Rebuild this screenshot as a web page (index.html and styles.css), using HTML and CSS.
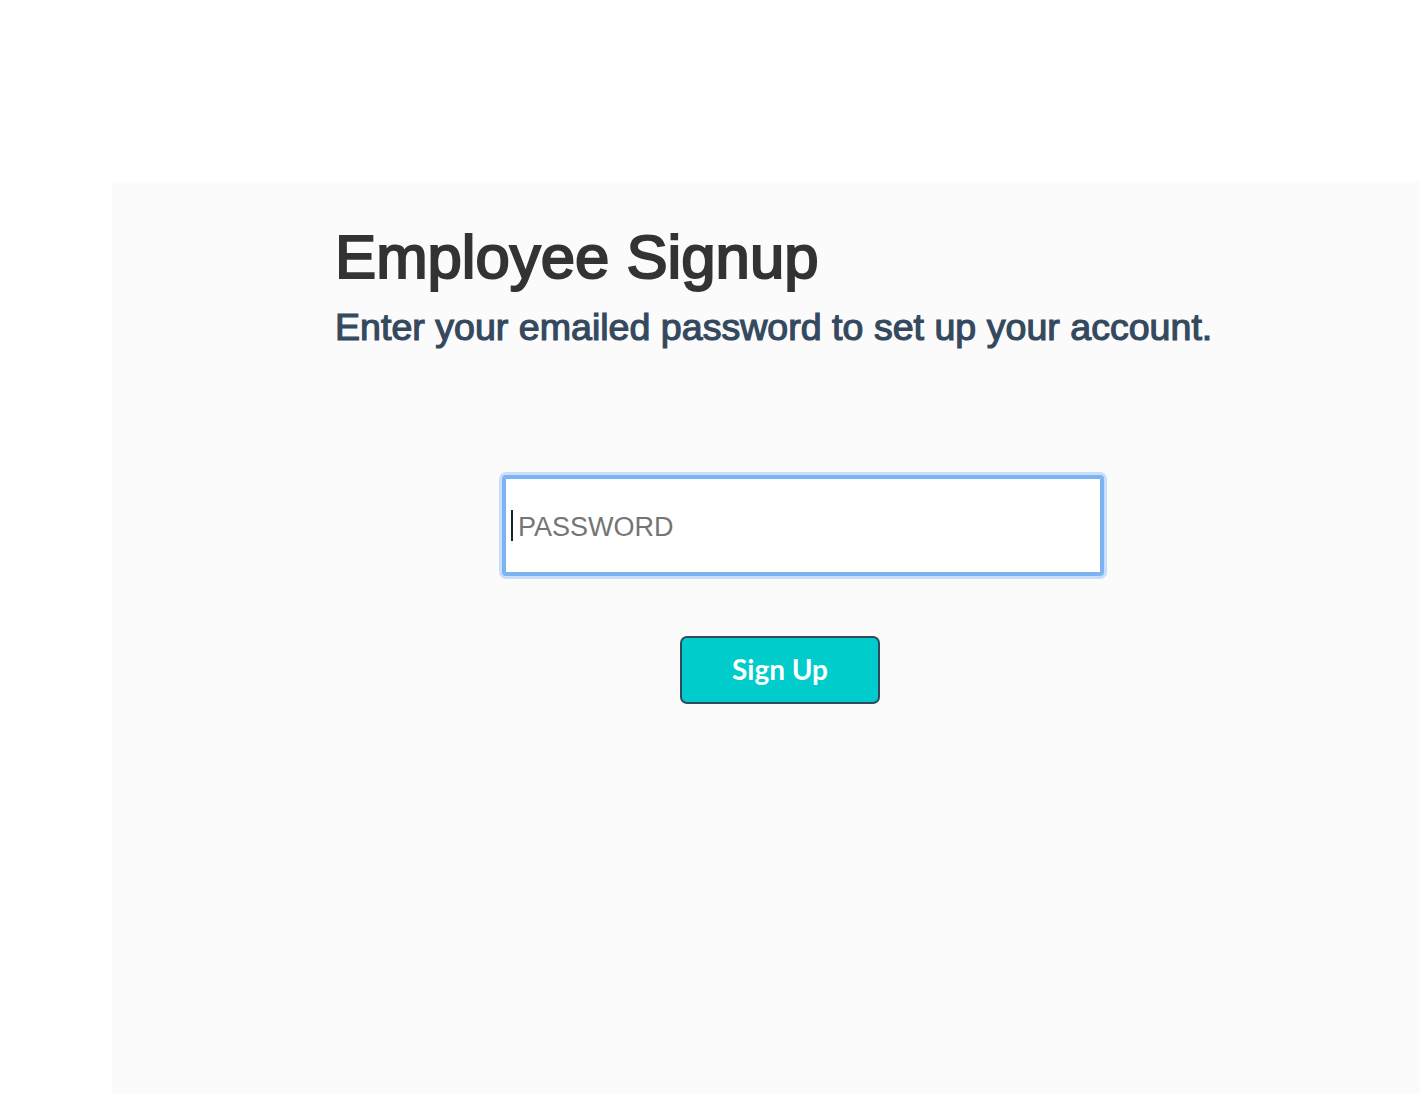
FILE: index.html
```html
<!DOCTYPE html>
<html lang="en">
<head>
<meta charset="utf-8">
<title>Employee Signup</title>
<link rel="stylesheet" href="styles.css">
</head>
<body>
<div class="page">
  <main class="panel">
    <h1 class="title">Employee Signup</h1>
    <p class="subtitle">Enter your emailed password to set up your account.</p>
    <form class="form">
      <div class="field">
        <input class="input" type="password" placeholder="PASSWORD">
        <span class="caret"></span>
      </div>
      <button class="btn" type="button">Sign Up</button>
    </form>
  </main>
</div>
</body>
</html>
```

FILE: styles.css
```css
html, body {
  margin: 0;
  padding: 0;
  background: #ffffff;
}
.page {
  padding: 182px 0 0 112px;
  min-height: 1094px;
  box-sizing: border-box;
  display: flex;
}
.panel {
  flex: 1;
  background: #fbfbfb;
  padding: 42px 0 0 223px;
  min-height: 912px;
  box-sizing: border-box;
}
.title {
  margin: 0;
  font-family: "Liberation Sans", Arial, sans-serif;
  font-weight: 400;
  font-size: 61.7px;
  line-height: 66px;
  color: #333333;
  -webkit-text-stroke: 2.1px #333333;
}
.subtitle {
  margin: 15px 0 0 0;
  font-family: "Liberation Sans", Arial, sans-serif;
  font-weight: 400;
  font-size: 37.6px;
  line-height: 44px;
  color: #34495e;
  -webkit-text-stroke: 1.2px #34495e;
}
.form {
  display: flex;
  flex-direction: column;
  align-items: flex-start;
}
.field {
  position: relative;
  margin: 126px 0 0 167px;
}
.input {
  display: block;
  width: 602px;
  height: 101px;
  box-sizing: border-box;
  border: 4px solid #7db3f3;
  border-radius: 4px;
  box-shadow: 0 0 0 3px #c8def9;
  background: #ffffff;
  padding: 3px 12px 0 12px;
  font-family: "Liberation Sans", Arial, sans-serif;
  font-size: 27px;
  color: #333;
  outline: none;
}
.input::placeholder {
  color: #757575;
}
.caret {
  position: absolute;
  left: 9px;
  top: 35px;
  width: 2px;
  height: 31px;
  background: #222;
}
.btn {
  margin: 60px 0 0 345px;
  width: 200px;
  height: 68px;
  box-sizing: border-box;
  background: #00cccc;
  border: 2px solid #34495e;
  border-radius: 7px;
  color: #ffffff;
  font-family: Lato, "Open Sans", sans-serif;
  font-weight: 700;
  font-size: 28px;
  padding: 0 0 2px 0;
  display: flex;
  align-items: center;
  justify-content: center;
}
```
